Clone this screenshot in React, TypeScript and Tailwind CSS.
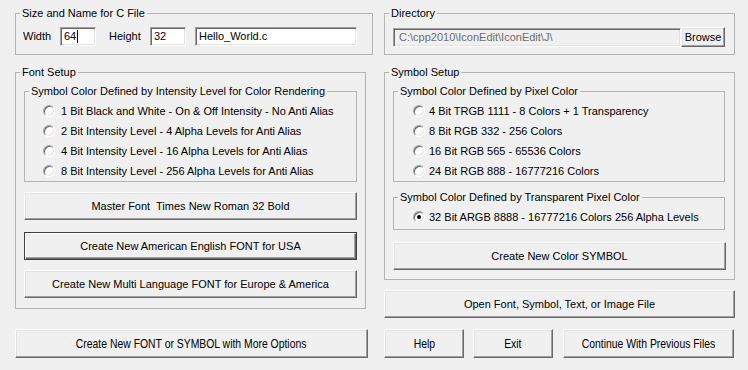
import React from "react";

const btn =
  "flex items-center justify-center bg-[#f0f0f0] border border-t-white border-l-white border-b-[#696969] border-r-[#696969] shadow-[inset_-1px_-1px_0_#a0a0a0,inset_1px_1px_0_#e3e3e3] text-black";
const btnDefault =
  "flex items-center justify-center bg-[#f0f0f0] border border-[#404040] shadow-[inset_1px_1px_0_#ffffff,inset_-1px_-1px_0_#696969,inset_-2px_-2px_0_#a0a0a0] text-black";
const edit =
  "h-[19px] border border-t-[#a0a0a0] border-l-[#a0a0a0] border-b-white border-r-white shadow-[inset_1px_1px_0_#696969,inset_-1px_-1px_0_#e3e3e3] flex items-center pl-[3px] leading-none";

function Group({
  title,
  className,
  children,
}: {
  title: string;
  className: string;
  children?: React.ReactNode;
}) {
  return (
    <fieldset className={"border border-[#b4b4b4] m-0 p-0 min-w-0 " + className}>
      <legend className="ml-[4px] px-[2px] leading-[13px] h-[13px] text-black">{title}</legend>
      {children}
    </fieldset>
  );
}

function Radio({ checked = false }: { checked?: boolean }) {
  return (
    <div className="w-[12px] h-[12px] shrink-0 rounded-full border border-t-[#a0a0a0] border-l-[#a0a0a0] border-b-white border-r-white bg-white shadow-[inset_1px_1px_0_#696969,inset_-1px_-1px_0_#e3e3e3] flex items-center justify-center">
      {checked && <div className="w-[4px] h-[4px] rounded-full bg-black" />}
    </div>
  );
}

function RadioRow({
  label,
  checked,
  gap,
}: {
  label: string;
  checked?: boolean;
  gap: string;
}) {
  return (
    <div className={"h-[20px] flex items-center " + gap}>
      <Radio checked={checked} />
      <span className="leading-none">{label}</span>
    </div>
  );
}

function NarrowText({ children }: { children: React.ReactNode }) {
  return (
    <span className="inline-block whitespace-nowrap text-[13px] leading-none scale-x-[0.8]">
      {children}
    </span>
  );
}

export default function App() {
  return (
    <div className="w-[748px] h-[370px] bg-[#f0f0f0] text-[11px] text-black font-['Liberation_Sans',Arial,sans-serif] pt-[7px] overflow-hidden">
      {/* Row 1 */}
      <div className="flex pl-[15px]">
        <Group title="Size and Name for C File" className="w-[358px] h-[48px]">
          <div className="flex items-center mt-[7px] pl-[7px]">
            <span className="w-[37px]">Width</span>
            <div className={edit + " w-[36px] bg-white"}>
              64<span className="inline-block w-[1px] h-[13px] bg-black ml-[1px]" />
            </div>
            <span className="ml-[13px] w-[41px]">Height</span>
            <div className={edit + " w-[36px] bg-white"}>32</div>
            <div className={edit + " w-[162px] ml-[9px] bg-white"}>Hello_World.c</div>
          </div>
        </Group>
        <Group title="Directory" className="w-[351px] h-[48px] ml-[11px]">
          <div className="flex items-center mt-[7px] pl-[8px]">
            <div className={edit + " w-[288px] bg-[#f0f0f0] text-[#6d6d6d] pl-[5px]"}>
              C:\cpp2010\IconEdit\IconEdit\J\
            </div>
            <div className={btn + " w-[44px] h-[20px]"}>Browse</div>
          </div>
        </Group>
      </div>

      {/* Row 2 */}
      <div className="flex items-start pl-[15px] mt-[11px]">
        <Group title="Font Setup" className="w-[351px] h-[243px]">
          <div className="pl-[8px] mt-[6px]">
            <Group
              title="Symbol Color Defined by Intensity Level for Color Rendering"
              className="w-[333px] h-[97px]"
            >
              <div className="pl-[18px] pt-[3px]">
                <RadioRow gap="gap-[6px]" label="1 Bit Black and White - On & Off Intensity - No Anti Alias" />
                <RadioRow gap="gap-[6px]" label="2 Bit Intensity Level - 4 Alpha Levels for Anti Alias" />
                <RadioRow gap="gap-[6px]" label="4 Bit Intensity Level - 16 Alpha Levels for Anti Alias" />
                <RadioRow gap="gap-[6px]" label="8 Bit Intensity Level - 256 Alpha Levels for Anti Alias" />
              </div>
            </Group>
            <div className={btn + " w-[333px] h-[28px] mt-[10px]"}>Master Font&nbsp; Times New Roman 32 Bold</div>
            <div className={btnDefault + " w-[333px] h-[28px] mt-[12px]"}>Create New American English FONT for USA</div>
            <div className={btn + " w-[333px] h-[28px] mt-[10px]"}>Create New Multi Language FONT for Europe &amp; America</div>
          </div>
        </Group>

        <div className="ml-[18px] w-[351px] flex flex-col">
          <Group title="Symbol Setup" className="w-[351px] h-[214px]">
            <div className="pl-[8px] mt-[6px]">
              <Group title="Symbol Color Defined by Pixel Color" className="w-[332px] h-[97px]">
                <div className="pl-[19px] pt-[3px]">
                  <RadioRow gap="gap-[4px]" label="4 Bit TRGB 1111 - 8 Colors + 1 Transparency" />
                  <RadioRow gap="gap-[4px]" label="8 Bit RGB 332 - 256 Colors" />
                  <RadioRow gap="gap-[4px]" label="16 Bit RGB 565 - 65536 Colors" />
                  <RadioRow gap="gap-[4px]" label="24 Bit RGB 888 - 16777216 Colors" />
                </div>
              </Group>
              <Group
                title="Symbol Color Defined by Transparent Pixel Color"
                className="w-[332px] h-[39px] mt-[9px]"
              >
                <div className="pl-[19px] mt-[5px] h-[16px] flex items-center gap-[4px]">
                  <Radio checked />
                  <span className="leading-none">32 Bit ARGB 8888 - 16777216 Colors 256 Alpha Levels</span>
                </div>
              </Group>
              <div className={btn + " w-[333px] h-[28px] mt-[12px]"}>Create New Color SYMBOL</div>
            </div>
          </Group>
          <div className={btn + " w-[351px] h-[28px] mt-[10px]"}>Open Font, Symbol, Text, or Image File</div>
        </div>
      </div>

      {/* Row 3 */}
      <div className="flex pl-[15px] mt-[11px]">
        <div className={btn + " w-[353px] h-[29px]"}>
          <NarrowText>Create New FONT or SYMBOL with More Options</NarrowText>
        </div>
        <div className={btn + " w-[80px] h-[29px] ml-[16px]"}>
          <NarrowText>Help</NarrowText>
        </div>
        <div className={btn + " w-[80px] h-[29px] ml-[9px]"}>
          <NarrowText>Exit</NarrowText>
        </div>
        <div className={btn + " w-[171px] h-[29px] ml-[10px]"}>
          <NarrowText>Continue With Previous Files</NarrowText>
        </div>
      </div>
    </div>
  );
}
